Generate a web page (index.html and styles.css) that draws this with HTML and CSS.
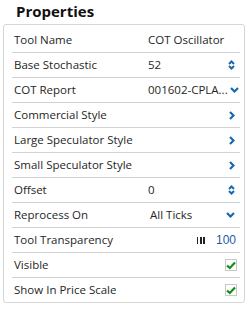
FILE: index.html
```html
<!DOCTYPE html>
<html>
<head>
	<meta charset="utf-8">
	<title>Properties</title>
	<link rel="stylesheet" href="styles.css">
</head>
<body>
<div class="panel">
	<h2>Properties</h2>
	<div class="box">
		<div class="row">
			<span class="label">Tool Name</span>
			<span class="val">COT Oscillator</span>
		</div>
		<div class="row">
			<span class="label">Base Stochastic</span>
			<span class="val">52</span>
			<svg class="ico" width="7" height="10" viewBox="0 0 7 10"><path d="M1 4 L3.5 1.5 L6 4 M1 6 L3.5 8.5 L6 6" fill="none" stroke="#1a68b0" stroke-width="2"/></svg>
		</div>
		<div class="row">
			<span class="label">COT Report</span>
			<span class="val right">001602-CPLA...</span>
			<svg class="ico" width="9" height="6" viewBox="0 0 9 6"><path d="M1 1 L4.5 4.5 L8 1" fill="none" stroke="#1a68b0" stroke-width="2.2"/></svg>
		</div>
		<div class="row">
			<span class="label">Commercial Style</span>
			<svg class="ico" width="6" height="9" viewBox="0 0 6 9"><path d="M1 1 L4.5 4.5 L1 8" fill="none" stroke="#1a68b0" stroke-width="2.2"/></svg>
		</div>
		<div class="row">
			<span class="label">Large Speculator Style</span>
			<svg class="ico" width="6" height="9" viewBox="0 0 6 9"><path d="M1 1 L4.5 4.5 L1 8" fill="none" stroke="#1a68b0" stroke-width="2.2"/></svg>
		</div>
		<div class="row">
			<span class="label">Small Speculator Style</span>
			<svg class="ico" width="6" height="9" viewBox="0 0 6 9"><path d="M1 1 L4.5 4.5 L1 8" fill="none" stroke="#1a68b0" stroke-width="2.2"/></svg>
		</div>
		<div class="row">
			<span class="label">Offset</span>
			<span class="val">0</span>
			<svg class="ico" width="7" height="10" viewBox="0 0 7 10"><path d="M1 4 L3.5 1.5 L6 4 M1 6 L3.5 8.5 L6 6" fill="none" stroke="#1a68b0" stroke-width="2"/></svg>
		</div>
		<div class="row">
			<span class="label">Reprocess On</span>
			<span class="val ticks">All Ticks</span>
			<svg class="ico" width="9" height="6" viewBox="0 0 9 6"><path d="M1 1 L4.5 4.5 L8 1" fill="none" stroke="#1a68b0" stroke-width="2.2"/></svg>
		</div>
		<div class="row">
			<span class="label">Tool Transparency</span>
			<span class="bars"><i></i><i></i><i></i></span>
			<span class="num">100</span>
		</div>
		<div class="row">
			<span class="label">Visible</span>
			<span class="chk"><svg width="10" height="9" viewBox="0 0 10 9"><path d="M1 4.5 L3.8 7 L9 1.5" fill="none" stroke="#159015" stroke-width="2.2"/></svg></span>
		</div>
		<div class="row">
			<span class="label">Show In Price Scale</span>
			<span class="chk"><svg width="10" height="9" viewBox="0 0 10 9"><path d="M1 4.5 L3.8 7 L9 1.5" fill="none" stroke="#159015" stroke-width="2.2"/></svg></span>
		</div>
	</div>
</div>
</body>
</html>
```
FILE: styles.css
```css
body,div,h2{margin:0;padding:0;}
body{background:#fff;color:#262626;font:11.5px/1.2 "Open Sans","Noto Sans",sans-serif;}
.panel{padding:0 0 0 3px;width:242px;}
.panel h2{font:700 15px/23px "Open Sans","Noto Sans",sans-serif;color:#111;padding-left:13px;height:24px;}
.box{border:1px solid #d6d6d6;border-radius:3px;padding:2px 4px 0 8px;}
.row{display:flex;align-items:center;height:24px;border-bottom:1px solid #d2d2d2;padding:0 5px 0 2px;white-space:nowrap;}
.row:first-child{height:25px;}
.row:last-child{border-bottom:0;}
.label{width:134px;flex:none;}
.val{flex:1;}
.val.right{text-align:right;padding-right:2px;}
.val.ticks{padding-left:2px;}
.ico{margin-left:auto;flex:none;}
.val + .ico{margin-left:0;}
.bars{margin-left:auto;display:flex;gap:1.5px;margin-right:11px;}
.bars i{display:block;width:1.8px;height:7px;background:#222;}
.num{font:12px "Liberation Sans",Arial,sans-serif;color:#1f5aa8;margin-right:-1px;}
.chk{margin-left:auto;margin-right:-2px;width:10px;height:10px;border:1px solid #c8c8c8;display:flex;align-items:center;justify-content:center;}
```
